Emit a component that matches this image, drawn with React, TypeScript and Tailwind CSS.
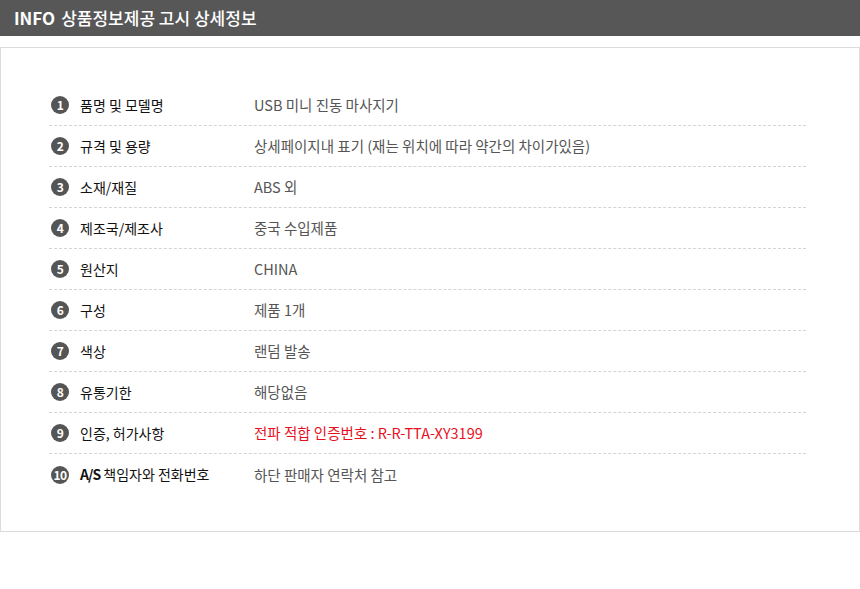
import React from "react";

const rows: { label: React.ReactNode; value: string; red?: boolean }[] = [
  { label: "품명 및 모델명", value: "USB 미니 진동 마사지기" },
  { label: "규격 및 용량", value: "상세페이지내 표기 (재는 위치에 따라 약간의 차이가있음)" },
  { label: "소재/재질", value: "ABS 외" },
  { label: "제조국/제조사", value: "중국 수입제품" },
  { label: "원산지", value: "CHINA" },
  { label: "구성", value: "제품 1개" },
  { label: "색상", value: "랜덤 발송" },
  { label: "유통기한", value: "해당없음" },
  { label: "인증, 허가사항", value: "전파 적합 인증번호 : R-R-TTA-XY3199", red: true },
  {
    label: (
      <>
        <span className="font-bold tracking-[-1px]">A/S</span> 책임자와 전화번호
      </>
    ),
    value: "하단 판매자 연락처 참고",
  },
];

export default function App() {
  return (
    <div
      className="w-[860px] bg-white"
      style={{ fontFamily: '"Noto Sans CJK KR", "Noto Sans", sans-serif' }}
    >
      <div className="h-[36px] bg-[#575757] flex items-center pl-[14px] text-white text-[17px] font-medium">
        <span className="font-bold mr-[6px]">INFO</span>
        <span>상품정보제공 고시 상세정보</span>
      </div>
      <div className="mt-[11px] border border-[#dcdcdc] pt-[37px] pb-[36px] pl-[48px] pr-[53px]">
        {rows.map((r, i) => (
          <div
            key={i}
            className={
              "h-[41px] flex items-center " +
              (i < rows.length - 1 ? "border-b border-dashed border-[#d4d4d4]" : "")
            }
          >
            <div className="w-[31px] flex items-center">
              <div className="ml-[2px] w-[18px] h-[18px] rounded-full bg-[#555555] text-white text-[12px] font-bold flex items-center justify-center leading-none tracking-[-0.5px]">
                {i + 1}
              </div>
            </div>
            <div className="w-[174px] text-[14px] text-[#111]">{r.label}</div>
            <div className={"text-[14.5px] " + (r.red ? "text-[#e8101e]" : "text-[#555]")}>
              {r.value}
            </div>
          </div>
        ))}
      </div>
    </div>
  );
}
